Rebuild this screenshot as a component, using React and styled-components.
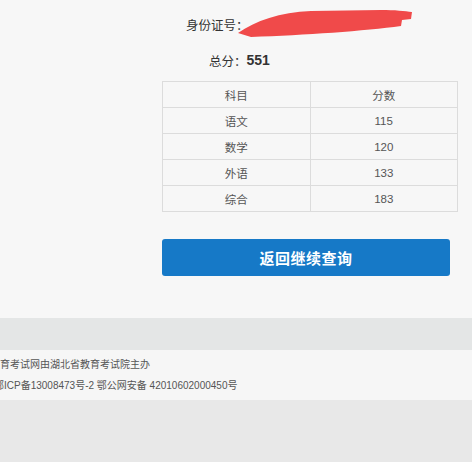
import React from 'react';
import styled, { createGlobalStyle } from 'styled-components';

const scores = [
  { subject: '语文', score: 115 },
  { subject: '数学', score: 120 },
  { subject: '外语', score: 133 },
  { subject: '综合', score: 183 },
];

const App = () => (
  <>
    <GlobalStyle />
    <Page>
      <Main>
        <Content>
          <InfoRow indent={24}>
            <Label>身份证号：</Label>
            <Scribble viewBox="0 0 180 32">
              <path
                d="M3 26 C 20 14, 45 5, 76 4 L 146 3 C 160 3, 170 4, 177 5 L 176 12 L 167 13 L 166 19 C 130 24, 70 28, 16 30 Z"
                fill="#f04a4a"
              />
            </Scribble>
          </InfoRow>
          <InfoRow indent={47} top={12}>
            <Label>总分：</Label>
            <Total>551</Total>
          </InfoRow>
          <Table>
            <thead>
              <tr>
                <Cell as="th">科目</Cell>
                <Cell as="th">分数</Cell>
              </tr>
            </thead>
            <tbody>
              {scores.map(row => (
                <tr key={row.subject}>
                  <Cell>{row.subject}</Cell>
                  <Cell>{row.score}</Cell>
                </tr>
              ))}
            </tbody>
          </Table>
          <Button>返回继续查询</Button>
        </Content>
      </Main>
      <Band />
      <Footer>
        <FooterLine shift={-30}>湖北教育考试网由湖北省教育考试院主办</FooterLine>
        <FooterLine shift={-6}>鄂ICP备13008473号-2 鄂公网安备 42010602000450号</FooterLine>
      </Footer>
      <Bottom />
    </Page>
  </>
);

const GlobalStyle = createGlobalStyle`
  body {
    margin: 0;
    font-family: "Noto Sans CJK SC", "Noto Sans", sans-serif;
    background: #e9e9e9;
    overflow: hidden;
  }
`;

const Page = styled.div`
  width: 472px;
  height: 462px;
  display: flex;
  flex-direction: column;
  overflow: hidden;
`;

const Main = styled.div`
  background: #f7f7f7;
  height: 318px;
  padding-top: 12px;
  box-sizing: border-box;
`;

const Content = styled.div`
  margin-left: 162px;
  width: 296px;
  display: flex;
  flex-direction: column;
`;

const InfoRow = styled.div`
  display: flex;
  align-items: center;
  height: 24px;
  padding-left: ${p => p.indent}px;
  margin-top: ${p => p.top || 0}px;
`;

const Label = styled.span`
  font-size: 12.5px;
  color: #333;
  white-space: nowrap;
`;

const Scribble = styled.svg`
  flex: none;
  width: 180px;
  height: 32px;
  margin-left: -14px;
  margin-top: -1px;
  margin-bottom: 1px;
  filter: blur(0.6px);
`;

const Total = styled.span`
  font-family: "Liberation Sans", Arial, sans-serif;
  font-weight: bold;
  font-size: 14px;
  color: #333;
`;

const Table = styled.table`
  margin-top: 9px;
  width: 296px;
  border-collapse: collapse;
  border: 1px solid #dcdcdc;
`;

const Cell = styled.td`
  width: 50%;
  height: 25px;
  padding: 0;
  border: 1px solid #dcdcdc;
  text-align: center;
  font-size: 11.5px;
  font-weight: normal;
  color: #555;
  font-family: "Liberation Sans", "Noto Sans CJK SC", sans-serif;
  &:first-child {
    width: 147px;
  }
`;

const Button = styled.button`
  margin-top: 27px;
  width: 288px;
  height: 37px;
  border: none;
  border-radius: 3px;
  background: #1679c7;
  color: #fff;
  font-size: 15px;
  font-weight: bold;
  font-family: "Noto Sans CJK SC", sans-serif;
  letter-spacing: 0.5px;
`;

const Band = styled.div`
  height: 32px;
  background: #e4e6e6;
`;

const Footer = styled.div`
  height: 50px;
  background: #f6f6f6;
  display: flex;
  flex-direction: column;
  justify-content: center;
  gap: 9px;
  overflow: hidden;
`;

const FooterLine = styled.div`
  margin-left: ${p => p.shift}px;
  font-size: 10px;
  line-height: 12px;
  color: #555;
  white-space: nowrap;
  font-family: "Liberation Sans", "Noto Sans CJK SC", sans-serif;
`;

const Bottom = styled.div`
  flex: 1;
  background: #e8e8e8;
`;

export default App;
